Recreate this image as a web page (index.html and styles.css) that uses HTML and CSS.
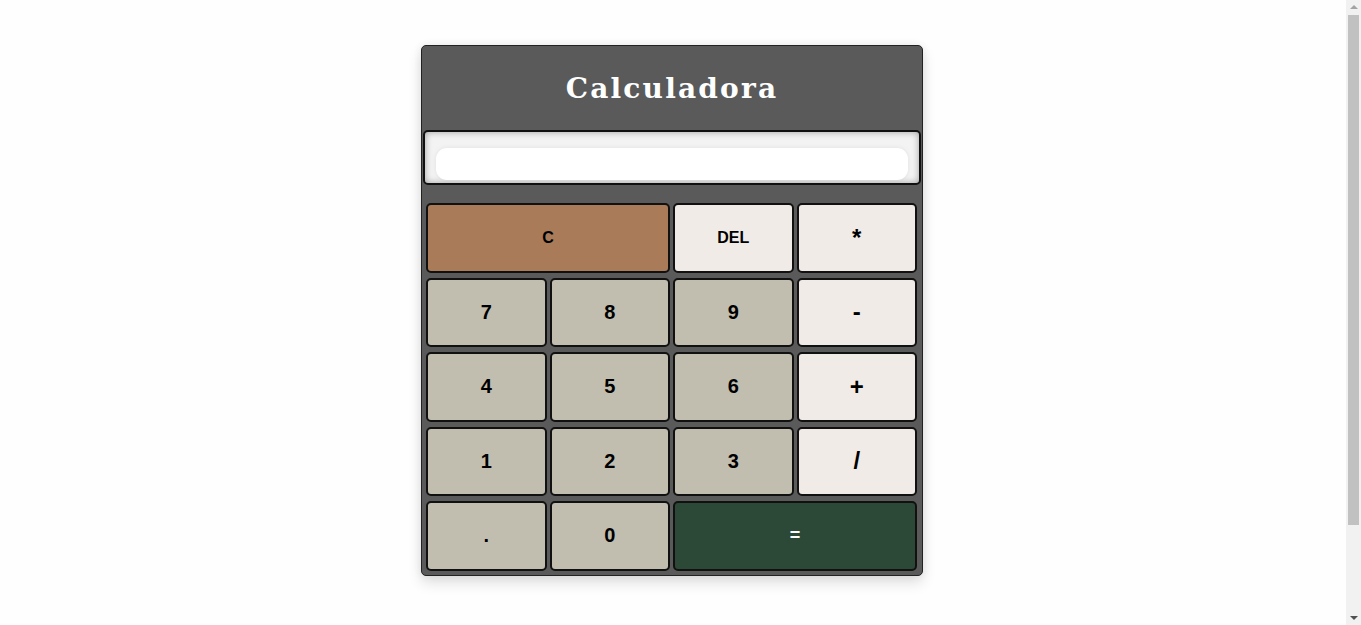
FILE: index.html
```html
<!DOCTYPE html>
<html lang="pt">
<head>
<meta charset="utf-8">
<title>Calculadora</title>
<link rel="stylesheet" href="styles.css">
</head>
<body>
<main class="page">
  <div class="calc">
    <header class="calc-header">
      <h1 class="calc-title">Calculadora</h1>
    </header>
    <div class="display">
      <input class="display-input" type="text" value="" readonly>
    </div>
    <div class="keys">
      <button class="key key-clear span-2">C</button>
      <button class="key key-op key-small">DEL</button>
      <button class="key key-op key-big">*</button>
      <button class="key key-num">7</button>
      <button class="key key-num">8</button>
      <button class="key key-num">9</button>
      <button class="key key-op key-big">-</button>
      <button class="key key-num">4</button>
      <button class="key key-num">5</button>
      <button class="key key-num">6</button>
      <button class="key key-op key-big">+</button>
      <button class="key key-num">1</button>
      <button class="key key-num">2</button>
      <button class="key key-num">3</button>
      <button class="key key-op key-big">/</button>
      <button class="key key-num">.</button>
      <button class="key key-num">0</button>
      <button class="key key-equal span-2">=</button>
    </div>
  </div>
</main>
<div class="scrollbar" aria-hidden="true">
  <div class="scroll-arrow scroll-up"></div>
  <div class="scroll-track"><div class="scroll-thumb"></div></div>
  <div class="scroll-arrow scroll-down"></div>
</div>
</body>
</html>
```
FILE: styles.css
```css
html, body {
  margin: 0;
  padding: 0;
  background: #fefefe;
}

.page {
  display: flex;
  justify-content: center;
  padding: 45px 17px 153px 0;
}

.calc {
  width: 500px;
  background: #5a5a5a;
  border: 1px solid #222;
  border-radius: 5px;
  box-shadow: 0 7px 14px rgba(0, 0, 0, 0.12), 0 0 10px rgba(0, 0, 0, 0.07);
  padding-bottom: 4px;
}

.calc-header {
  height: 84px;
  display: flex;
  align-items: center;
  justify-content: center;
}

.calc-title {
  margin: 0;
  color: #ffffff;
  font-family: "DejaVu Serif", "Liberation Serif", serif;
  font-weight: bold;
  font-size: 28px;
  letter-spacing: 2.2px;
}

.display {
  margin: 0 1px;
  height: 55px;
  box-sizing: border-box;
  border: 2px solid #111;
  border-radius: 5px;
  background: #f3f3f3;
  box-shadow: inset 0 0 7px rgba(0, 0, 0, 0.35);
  padding: 16px 11px 3px;
}

.display-input {
  display: block;
  width: 100%;
  height: 32px;
  box-sizing: border-box;
  border: none;
  outline: none;
  border-radius: 11px;
  background: #ffffff;
  box-shadow: 0 0 5px rgba(0, 0, 0, 0.08);
}

.keys {
  display: grid;
  grid-template-columns: repeat(4, 1fr);
  grid-auto-rows: 69.5px;
  column-gap: 3px;
  row-gap: 5px;
  margin: 18px 5px 0 4px;
}

.key {
  border: 2px solid #111;
  border-radius: 5px;
  font-family: "Liberation Sans", Arial, sans-serif;
  font-weight: bold;
  font-size: 20px;
  color: #000;
  padding: 0;
  cursor: pointer;
}

.span-2 {
  grid-column: span 2;
}

.key-num {
  background: #c1beaf;
}

.key-op {
  background: #f0ebe6;
}

.key-clear {
  background: #a97b58;
  font-size: 16px;
}

.key-small {
  font-size: 16px;
}

.key-big {
  font-size: 24px;
}

.key-equal {
  background: #2b4936;
  color: #ffffff;
  font-size: 18px;
}

/* fixed classic scrollbar overlay on the right edge */
.scrollbar {
  position: fixed;
  top: 0;
  right: 0;
  bottom: 0;
  width: 15px;
  background: #f1f1f1;
  display: flex;
  flex-direction: column;
}

.scroll-arrow {
  height: 15px;
  position: relative;
}

.scroll-up::after,
.scroll-down::after {
  content: "";
  position: absolute;
  left: 4px;
  border-left: 4px solid transparent;
  border-right: 4px solid transparent;
}

.scroll-up::after {
  top: 5px;
  border-bottom: 4px solid #a3a3a3;
}

.scroll-down::after {
  top: 6px;
  border-top: 4px solid #505050;
}

.scroll-track {
  flex: 1;
  padding: 0 2px;
}

.scroll-thumb {
  height: 510px;
  background: #c1c1c1;
}
```
